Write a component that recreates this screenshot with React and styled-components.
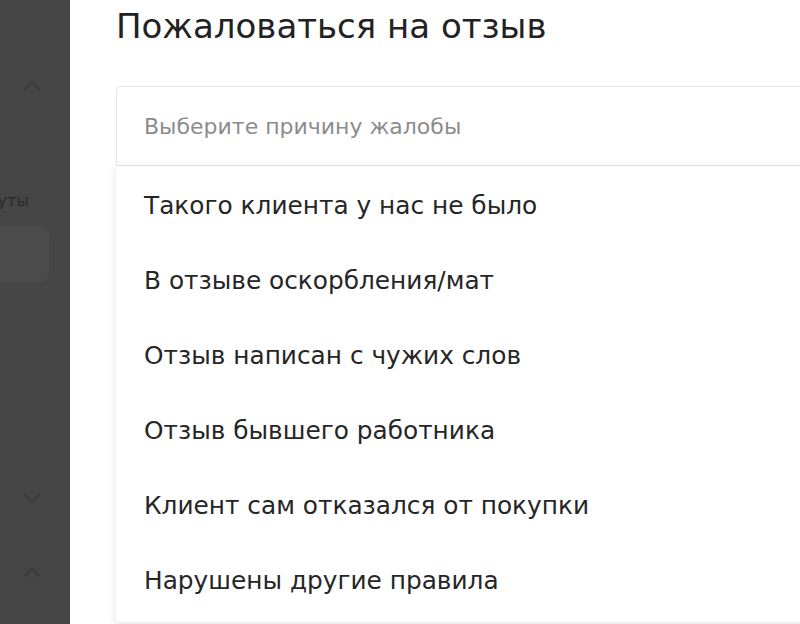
import React from 'react'
import styled, { createGlobalStyle } from 'styled-components'

const GlobalStyle = createGlobalStyle`
    html, body {
        margin: 0;
        padding: 0;
        width: 800px;
        height: 624px;
        overflow: hidden;
        background: #ffffff;
    }
    * {
        box-sizing: border-box;
    }
`

const Page = styled.div`
    display: flex;
    width: 800px;
    height: 624px;
    font-family: "DejaVu Sans", "Noto Sans", sans-serif;
    overflow: hidden;
`
const Sidebar = styled.div`
    flex: 0 0 70px;
    background: #464646;
    display: flex;
    flex-direction: column;
    overflow: hidden;
`
const Chevron = styled.div`
    height: 24px;
    margin-top: ${p => p.top}px;
    padding-left: 20px;
    color: #3a3a3a;
    display: flex;
    align-items: center;
`
const SideLabel = styled.div`
    margin-top: 93px;
    width: 29px;
    display: flex;
    justify-content: flex-end;
    color: #2a2a2a;
    font-size: 16px;
    white-space: nowrap;
`
const SideCard = styled.div`
    margin-top: 16px;
    margin-left: -20px;
    width: 69px;
    height: 56px;
    border-radius: 10px;
    background: #4b4b4b;
`
const Main = styled.div`
    flex: 1;
    padding-left: 46px;
    display: flex;
    flex-direction: column;
`
const Title = styled.h1`
    margin: 6px 0 0 0;
    font-size: 34px;
    font-weight: 400;
    color: #222222;
    line-height: 40px;
`
const Select = styled.div`
    margin-top: 40px;
    width: 720px;
    height: 80px;
    border: 1px solid #e6e6e6;
    border-radius: 4px 0 0 0;
    display: flex;
    align-items: center;
    padding-left: 27px;
    font-size: 22px;
    color: #8c8c8c;
`
const Menu = styled.div`
    width: 720px;
    background: #ffffff;
    border-radius: 0 0 4px 4px;
    box-shadow: 0 2px 8px rgba(0, 0, 0, 0.12);
    padding: 2px 0 4px;
`
const Option = styled.div`
    height: 75px;
    display: flex;
    align-items: center;
    padding-left: 28px;
    font-size: 24.8px;
    color: #262626;
`

const ChevronIcon = ({ down }) => (
    <svg width="24" height="24" viewBox="0 0 24 24" fill="none" stroke="currentColor" strokeWidth="2">
        <path d={down ? 'M4 8l8 8 8-8' : 'M4 16l8-8 8 8'} />
    </svg>
)

const reasons = [
    'Такого клиента у нас не было',
    'В отзыве оскорбления/мат',
    'Отзыв написан с чужих слов',
    'Отзыв бывшего работника',
    'Клиент сам отказался от покупки',
    'Нарушены другие правила',
]

const App = () => {
  return (
    <Page>
        <GlobalStyle />
        <Sidebar>
            <Chevron top={74}><ChevronIcon /></Chevron>
            <SideLabel><span>уты</span></SideLabel>
            <SideCard />
            <Chevron top={204}><ChevronIcon down /></Chevron>
            <Chevron top={51}><ChevronIcon /></Chevron>
        </Sidebar>
        <Main>
            <Title>Пожаловаться на отзыв</Title>
            <Select>Выберите причину жалобы</Select>
            <Menu>
                {reasons.map(r => <Option key={r}>{r}</Option>)}
            </Menu>
        </Main>
    </Page>
  )
}

export default App
